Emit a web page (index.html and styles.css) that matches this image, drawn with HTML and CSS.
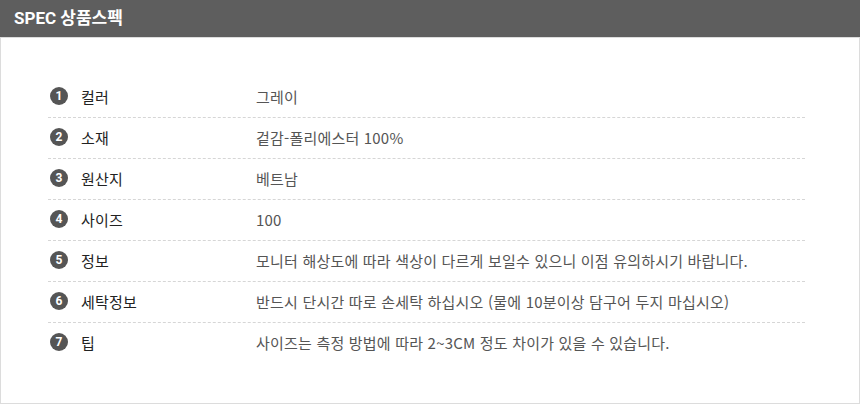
FILE: index.html
```html
<!DOCTYPE html>
<html lang="ko">
  <head>
    <meta charset="UTF-8" />
    <meta name="viewport" content="width=device-width, initial-scale=1.0" />
    <title>SPEC 상품스펙</title>
    <link rel="stylesheet" href="styles.css">
  </head>
  <body>
    <div class="spec">
      <h2 class="spec-title">SPEC 상품스펙</h2>
      <div class="spec-box">
        <ul class="spec-list">
          <li class="spec-row">
            <span class="num">1</span>
            <span class="label">컬러</span>
            <span class="value">그레이</span>
          </li>
          <li class="spec-row">
            <span class="num">2</span>
            <span class="label">소재</span>
            <span class="value">겉감-폴리에스터 100%</span>
          </li>
          <li class="spec-row">
            <span class="num">3</span>
            <span class="label">원산지</span>
            <span class="value">베트남</span>
          </li>
          <li class="spec-row">
            <span class="num">4</span>
            <span class="label">사이즈</span>
            <span class="value">100</span>
          </li>
          <li class="spec-row">
            <span class="num">5</span>
            <span class="label">정보</span>
            <span class="value">모니터 해상도에 따라 색상이 다르게 보일수 있으니 이점 유의하시기 바랍니다.</span>
          </li>
          <li class="spec-row">
            <span class="num">6</span>
            <span class="label">세탁정보</span>
            <span class="value">반드시 단시간 따로 손세탁 하십시오 (물에 10분이상 담구어 두지 마십시오)</span>
          </li>
          <li class="spec-row">
            <span class="num">7</span>
            <span class="label">팁</span>
            <span class="value">사이즈는 측정 방법에 따라 2~3CM 정도 차이가 있을 수 있습니다.</span>
          </li>
        </ul>
      </div>
    </div>
  </body>
</html>
```

FILE: styles.css
```css
body {
  margin: 0;
  background: #fff;
  font-family: "Noto Sans CJK KR", "Noto Sans", sans-serif;
  color: #333;
}
.spec {
  width: 860px;
}
.spec-title {
  margin: 0;
  height: 37px;
  line-height: 36px;
  padding-left: 14px;
  background: #5e5e5e;
  color: #fff;
  font-family: Roboto, "Noto Sans CJK KR", sans-serif;
  font-size: 17px;
  font-weight: bold;
}
.spec-box {
  height: 365px;
  border: 1px solid #dcdcdc;
  box-sizing: content-box;
}
.spec-list {
  list-style: none;
  margin: 39px 54px 0 47px;
  padding: 0;
}
.spec-row {
  display: flex;
  align-items: center;
  height: 38px;
  padding-bottom: 2px;
  border-bottom: 1px dashed #d6d6d6;
  font-size: 15px;
  letter-spacing: 0.2px;
}
.spec-row:last-child {
  border-bottom: none;
}
.num {
  width: 18px;
  height: 18px;
  margin-left: 2px;
  border-radius: 50%;
  background: #555;
  color: #fff;
  font-family: Roboto, sans-serif;
  font-size: 12px;
  font-weight: bold;
  line-height: 18px;
  text-align: center;
  letter-spacing: 0;
}
.label {
  width: 175px;
  margin-left: 13px;
  color: #222;
}
.value {
  color: #555;
}
```
